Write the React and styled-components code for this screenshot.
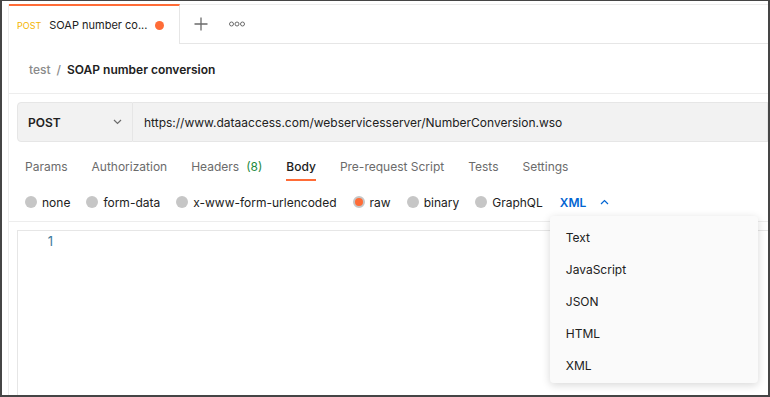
import React from "react";
import styled, { createGlobalStyle } from "styled-components";

const GlobalStyle = createGlobalStyle`
    body {
        margin: 0;
        font-family: Inter, "Noto Sans", sans-serif;
        color: #212121;
    }
`;

const Frame = styled.div`
    position: relative;
    width: 770px;
    height: 397px;
    box-sizing: border-box;
    border: 2px solid #454545;
    border-top-width: 1px;
    padding: 3px 0 0 6px;
    background: #fff;
    overflow: hidden;
`;

const Pane = styled.div`
    height: 100%;
    border-left: 1px solid #ededed;
    border-top: 1px solid #ededed;
    display: flex;
    flex-direction: column;
`;

const TabBar = styled.div`
    display: flex;
    align-items: stretch;
    height: 38px;
    border-bottom: 1px solid #e6e6e6;
    flex-shrink: 0;
`;

const ActiveTab = styled.div`
    display: flex;
    align-items: center;
    box-sizing: border-box;
    width: 171px;
    height: 40px;
    margin-top: -1px;
    padding: 0 15px 0 8px;
    border-top: 2px solid #ff6c37;
    border-right: 1px solid #e6e6e6;
    background: #fff;
    font-size: 11px;
`;

const MethodTag = styled.span`
    color: #f4b400;
    font-size: 9px;
    margin-right: 8px;
`;

const TabTitle = styled.span`
    flex: 1;
    color: #212121;
    white-space: nowrap;
`;

const Dot = styled.span`
    width: 9px;
    height: 9px;
    border-radius: 50%;
    background: #ff6c37;
`;

const IconButton = styled.div`
    display: flex;
    align-items: center;
    justify-content: center;
    width: ${p => p.$w}px;
    color: #6b6b6b;
`;

const Breadcrumb = styled.div`
    display: flex;
    align-items: center;
    gap: 6px;
    height: 50px;
    padding: 2px 0 0 20px;
    box-sizing: border-box;
    border-bottom: 1px solid #ededed;
    font-size: 12px;
    flex-shrink: 0;
`;

const Crumb = styled.span`
    color: ${p => (p.$current ? "#212121" : "#8a8a8a")};
    font-weight: ${p => (p.$current ? 600 : 500)};
`;

const UrlRow = styled.div`
    display: flex;
    height: 40px;
    margin: 8px 0 0 8px;
    flex-shrink: 0;
`;

const MethodSelect = styled.div`
    display: flex;
    align-items: center;
    justify-content: space-between;
    box-sizing: border-box;
    width: 116px;
    padding: 0 10px 0 10px;
    background: #f2f2f2;
    border: 1px solid #e6e6e6;
    border-radius: 4px 0 0 4px;
    font-size: 12px;
    font-weight: 600;
`;

const UrlInput = styled.div`
    flex: 1;
    display: flex;
    align-items: center;
    padding-left: 11px;
    background: #f2f2f2;
    border: 1px solid #e6e6e6;
    border-left: none;
    font-size: 12px;
    white-space: nowrap;
`;

const RequestTabs = styled.div`
    display: flex;
    gap: 24px;
    height: 46px;
    padding: 0 16px;
    font-size: 12px;
    flex-shrink: 0;
`;

const RequestTab = styled.div`
    position: relative;
    display: flex;
    align-items: center;
    padding-top: 3px;
    color: ${p => (p.$active ? "#212121" : "#6b6b6b")};
    font-weight: ${p => (p.$active ? 500 : 400)};

    ${p => p.$active && `
        &::after {
            content: "";
            position: absolute;
            left: 0;
            right: 0;
            bottom: 7px;
            height: 2px;
            background: #ff6c37;
        }
    `}
`;

const Count = styled.span`
    color: #1e8a3f;
    margin-left: 7px;
`;

const BodyTypes = styled.div`
    display: flex;
    align-items: center;
    box-sizing: border-box;
    height: 34px;
    padding: 0 16px 5px;
    border-bottom: 1px solid #ededed;
    font-size: 12px;
    flex-shrink: 0;
`;

const RadioOption = styled.label`
    display: flex;
    align-items: center;
    gap: 5px;
    margin-right: 16px;
    color: #212121;
`;

const RadioDot = styled.span`
    box-sizing: border-box;
    width: 12px;
    height: 12px;
    border-radius: 50%;
    background: ${p => (p.$checked ? "#ff6c37" : "#c6c6c6")};
    border: ${p => (p.$checked ? "2px solid #c6c6c6" : "none")};
`;

const LangSelect = styled.div`
    position: relative;
    display: flex;
    align-items: center;
    gap: 14px;
    height: 24px;
    margin-left: -9px;
    padding: 0 10px;
    color: #0265d2;
    font-weight: 600;
`;

const Menu = styled.div`
    position: absolute;
    left: 0;
    top: 26px;
    width: 208px;
    box-sizing: border-box;
    padding: 5px 0 2px;
    background: #fafafa;
    border-radius: 4px;
    box-shadow: 0 2px 8px rgba(0, 0, 0, 0.16);
    z-index: 5;
`;

const MenuItem = styled.div`
    display: flex;
    align-items: center;
    height: 32px;
    padding-left: 16px;
    color: #212121;
    font-weight: 400;
    font-size: 12px;
`;

const Editor = styled.div`
    flex: 1;
    display: flex;
    margin: 8px 0 0 8px;
    border-left: 1px solid #e6e6e6;
    border-top: 1px solid #e6e6e6;
`;

const Gutter = styled.div`
    width: 35px;
    padding-top: 1px;
    text-align: right;
    font-family: Inter, sans-serif;
    font-size: 13px;
    line-height: 18px;
    color: #3f7a9c;
`;

const bodyTypes = ["none", "form-data", "x-www-form-urlencoded", "raw", "binary", "GraphQL"];
const languages = ["Text", "JavaScript", "JSON", "HTML", "XML"];

const Chevron = ({ up, color }) => (
    <svg width="9" height="6" viewBox="0 0 9 6" fill="none" stroke={color} strokeWidth="1.2">
        <path d={up ? "M1 5l3.5-3.5L8 5" : "M1 1l3.5 3.5L8 1"} />
    </svg>
);

const App = () => {
    return (
        <>
            <GlobalStyle />
            <Frame>
                <Pane>
                    <TabBar>
                        <ActiveTab>
                            <MethodTag>POST</MethodTag>
                            <TabTitle>SOAP number co...</TabTitle>
                            <Dot />
                        </ActiveTab>
                        <IconButton $w={42}>
                            <svg width="14" height="14" viewBox="0 0 14 14" stroke="#6b6b6b" strokeWidth="1.3">
                                <path d="M7 0.5v13M0.5 7h13" />
                            </svg>
                        </IconButton>
                        <IconButton $w={30}>
                            <svg width="16" height="6" viewBox="0 0 16 6" fill="none" stroke="#6b6b6b" strokeWidth="1">
                                <circle cx="2.5" cy="3" r="2" />
                                <circle cx="8" cy="3" r="2" />
                                <circle cx="13.5" cy="3" r="2" />
                            </svg>
                        </IconButton>
                    </TabBar>

                    <Breadcrumb>
                        <Crumb>test</Crumb>
                        <Crumb>/</Crumb>
                        <Crumb $current>SOAP number conversion</Crumb>
                    </Breadcrumb>

                    <UrlRow>
                        <MethodSelect>
                            POST
                            <Chevron color="#6b6b6b" />
                        </MethodSelect>
                        <UrlInput>https://www.dataaccess.com/webservicesserver/NumberConversion.wso</UrlInput>
                    </UrlRow>

                    <RequestTabs>
                        <RequestTab>Params</RequestTab>
                        <RequestTab>Authorization</RequestTab>
                        <RequestTab>Headers<Count>(8)</Count></RequestTab>
                        <RequestTab $active>Body</RequestTab>
                        <RequestTab>Pre-request Script</RequestTab>
                        <RequestTab>Tests</RequestTab>
                        <RequestTab>Settings</RequestTab>
                    </RequestTabs>

                    <BodyTypes>
                        {bodyTypes.map(t => (
                            <RadioOption key={t}>
                                <RadioDot $checked={t === "raw"} />
                                {t}
                            </RadioOption>
                        ))}
                        <LangSelect>
                            XML
                            <Chevron up color="#0265d2" />
                            <Menu>
                                {languages.map(l => (
                                    <MenuItem key={l}>{l}</MenuItem>
                                ))}
                            </Menu>
                        </LangSelect>
                    </BodyTypes>

                    <Editor>
                        <Gutter>1</Gutter>
                    </Editor>
                </Pane>
            </Frame>
        </>
    );
};

export default App;
